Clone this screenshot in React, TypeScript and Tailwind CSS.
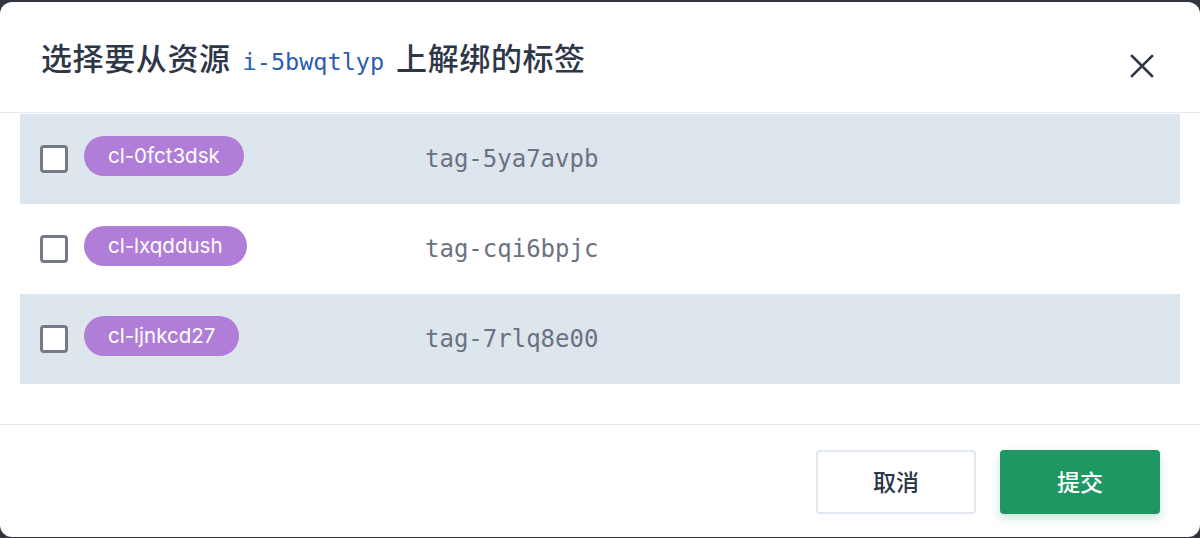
import React from "react";

const rows = [
  { badge: "cl-0fct3dsk", tag: "tag-5ya7avpb", striped: true },
  { badge: "cl-lxqddush", tag: "tag-cqi6bpjc", striped: false },
  { badge: "cl-ljnkcd27", tag: "tag-7rlq8e00", striped: true },
];

export default function App() {
  return (
    <div className="h-[538px] w-[1200px] overflow-hidden bg-[#2f353b] pt-[2px] font-['Inter','Noto_Sans_CJK_SC',sans-serif]">
      <div className="flex h-[535px] flex-col rounded-[12px] bg-white">
        <div className="flex h-[111px] items-center justify-between border-b border-[#e2e8f0] pl-[41px] pr-[46px]">
          <h1 className="mt-[4px] text-[31px] font-medium tracking-[0.6px] text-[#2d3748]">
            选择要从资源
            <code className="mx-[12px] font-['DejaVu_Sans_Mono',monospace] text-[23.5px] font-normal tracking-normal text-[#2b5cb3]">
              i-5bwqtlyp
            </code>
            上解绑的标签
          </h1>
          <svg width="24" height="24" viewBox="0 0 24 24" className="mt-[17px] text-[#2d3748]">
            <path d="M2 2 L22 22 M22 2 L2 22" stroke="currentColor" strokeWidth="2.6" strokeLinecap="square" />
          </svg>
        </div>
        <div className="h-[312px] border-b border-[#e2e8f0] px-[20px] pt-[1px]">
          {rows.map((r) => (
            <div
              key={r.tag}
              className={`flex h-[90px] items-center pl-[20px] ${r.striped ? "bg-[#dde5ed]" : "bg-white"}`}
            >
              <div className="h-[28px] w-[28px] shrink-0 rounded-[4px] border-[3px] border-[#767a88] bg-white" />
              <div className="ml-[16px] w-[341px] shrink-0">
                <div className="mb-[6px] flex h-[40px] w-fit items-center rounded-full bg-[#b07ed8] px-[24px] text-[20.5px] text-white">
                  {r.badge}
                </div>
              </div>
              <div className="font-['DejaVu_Sans_Mono',monospace] text-[24px] text-[#6b7280]">
                {r.tag}
              </div>
            </div>
          ))}
        </div>
        <div className="flex flex-1 items-start justify-end gap-[24px] pr-[40px] pt-[25px]">
          <button className="flex h-[64px] w-[160px] items-center justify-center rounded-[4px] border-2 border-[#e2e8f0] bg-white pt-[3px] text-[23px] font-medium text-[#2d3748]">
            取消
          </button>
          <button className="flex h-[64px] w-[160px] items-center justify-center rounded-[4px] bg-[#1e9862] pt-[3px] text-[23px] font-medium text-white shadow-[0_4px_10px_rgba(30,152,98,0.25)]">
            提交
          </button>
        </div>
      </div>
    </div>
  );
}
